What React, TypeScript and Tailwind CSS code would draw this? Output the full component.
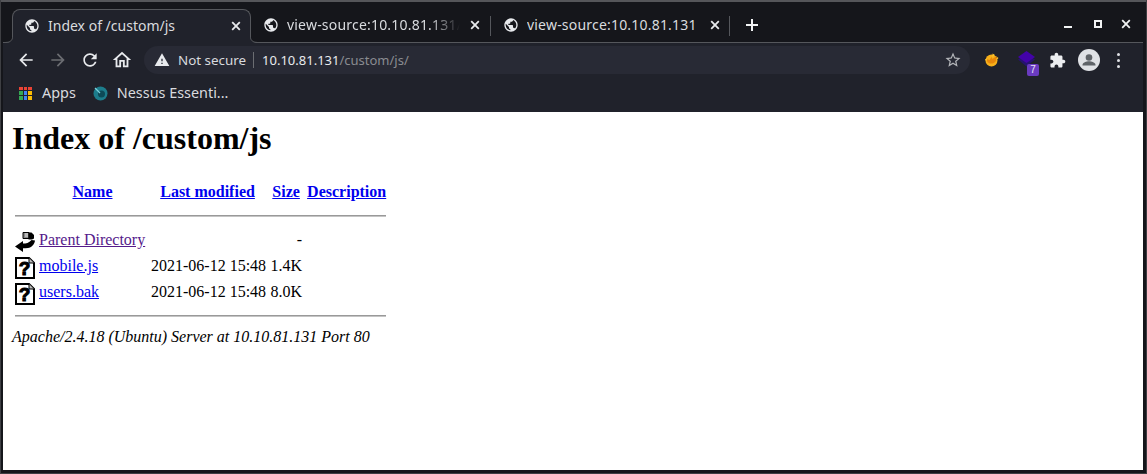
const P = {
  back: "M20 11H7.83l5.59-5.59L12 4l-8 8 8 8 1.41-1.41L7.83 13H20v-2z",
  reload: "M17.65 6.35C16.2 4.9 14.21 4 12 4c-4.42 0-7.99 3.58-7.99 8s3.57 8 7.99 8c3.73 0 6.84-2.55 7.73-6h-2.08c-.82 2.33-3.04 4-5.65 4-3.31 0-6-2.69-6-6s2.69-6 6-6c1.66 0 3.14.69 4.22 1.78L13 11h7V4l-2.35 2.35z",
  home: "M12 5.69l5 4.5V18h-2v-6H9v6H7v-7.81l5-4.5M12 3L2 12h3v8h6v-6h2v6h6v-8h3L12 3z",
  warn: "M1 21h22L12 2 1 21zm12-3h-2v-2h2v2zm0-4h-2v-4h2v4z",
  star: "M22 9.24l-7.19-.62L12 2 9.19 8.63 2 9.24l5.46 4.73L5.82 21 12 17.27 18.18 21l-1.63-7.03L22 9.24zM12 15.4l-3.76 2.27 1-4.28-3.32-2.88 4.38-.38L12 6.1l1.71 4.04 4.38.38-3.32 2.88 1 4.28L12 15.4z",
  ext: "M20.5 11H19V7c0-1.1-.9-2-2-2h-4V3.5C13 2.12 11.88 1 10.5 1S8 2.12 8 3.5V5H4c-1.1 0-1.99.9-1.99 2v3.8H3.5c1.49 0 2.7 1.21 2.7 2.7s-1.21 2.7-2.7 2.7H2V20c0 1.1.9 2 2 2h3.8v-1.5c0-1.49 1.21-2.7 2.7-2.7 1.49 0 2.7 1.21 2.7 2.7V22H17c1.1 0 2-.9 2-2v-4h1.5c1.38 0 2.5-1.12 2.5-2.5S21.88 11 20.5 11z",
  globe: "M12 2C6.48 2 2 6.48 2 12s4.48 10 10 10 10-4.48 10-10S17.52 2 12 2zm-1 17.93c-3.95-.49-7-3.85-7-7.93 0-.62.08-1.21.21-1.79L9 15v1c0 1.1.9 2 2 2v1.93zm6.9-2.54c-.26-.81-1-1.39-1.9-1.39h-1v-3c0-.55-.45-1-1-1H8v-2h2c.55 0 1-.45 1-1V7h2c1.1 0 2-.9 2-2v-.41c2.93 1.19 5 4.06 5 7.41 0 2.08-.8 3.97-2.1 5.39z",
};

function Icon({ d, size = 20, className = "" }: { d: string; size?: number; className?: string }) {
  return (
    <svg width={size} height={size} viewBox="0 0 24 24" fill="currentColor" className={className}>
      <path d={d} />
    </svg>
  );
}

function CloseX({ className = "" }: { className?: string }) {
  return (
    <svg width="10" height="10" viewBox="0 0 10 10" className={className} stroke="currentColor" strokeWidth="1.8" fill="none">
      <path d="M1.2 1.2l7.6 7.6M8.8 1.2l-7.6 7.6" />
    </svg>
  );
}

function Tab({ title, fade, wide }: { title: string; fade?: boolean; wide?: boolean }) {
  return (
    <div className="flex h-[33px] w-[239px] shrink-0 items-center pb-[2px] pl-[12px] pr-[10px] text-[#d9dbdf]">
      <Icon d={P.globe} size={16} className="shrink-0 text-[#e8eaed]" />
      <span
        className={`ml-[8px] flex-1 overflow-hidden whitespace-nowrap ${wide ? "tracking-[0.2px]" : ""} ${fade ? "[mask-image:linear-gradient(to_right,black_82%,transparent)]" : ""}`}
      >
        {title}
      </span>
      <CloseX className="ml-[10px] shrink-0 text-[#e8eaed]" />
    </div>
  );
}

function ParentIcon() {
  return (
    <svg width="20" height="22" viewBox="0 0 20 22" className="block">
      <path d="M8 1.500h6v6H8z" fill="#8a8a8a" stroke="#000" strokeWidth="1" />
      <path d="M10 3h3M10 5h3" stroke="#fff" strokeWidth="0.8" />
      <path d="M13.500 1.500h3l2.500 2.500v3.500l-2 1h-3.500z" fill="#000" />
      <path d="M0 15.500L8 10v2.500c3 0 6-.5 8.500-3.500L20 9.500c-.5 4-3.500 7-7 7.500-1.500.2-3.500.3-5 .3V21z" fill="#000" />
    </svg>
  );
}

function UnknownIcon() {
  return (
    <svg width="20" height="22" viewBox="0 0 20 22" className="block">
      <path d="M1 1H14L19 6V21H1z" fill="#fff" stroke="#000" strokeWidth="2" />
      <path d="M14 1v5h5" fill="#bbb" stroke="#000" strokeWidth="1" />
      <text x="9.500" y="18" textAnchor="middle" fontFamily="'Liberation Sans', sans-serif" fontWeight="700" fontSize="19" fill="#000" stroke="#000" strokeWidth="1">?</text>
    </svg>
  );
}

function Row({ icon, name, date, size, visited }: { icon: React.ReactNode; name: string; date: string; size: string; visited?: boolean }) {
  return (
    <tr>
      <td className="h-[24px] p-[1px] align-top">{icon}</td>
      <td className="p-[1px] align-top">
        <a href="#" className={`underline ${visited ? "text-[#551a8b]" : "text-[#0000ee]"}`}>{name}</a>
      </td>
      <td className="p-[1px] text-right align-top whitespace-nowrap">{date}</td>
      <td className="p-[1px] text-right align-top">{size}</td>
      <td className="p-[1px]"></td>
    </tr>
  );
}

function Th({ label, className }: { label: string; className: string }) {
  return (
    <th className={`p-[1px] text-center font-bold whitespace-nowrap ${className}`}>
      <a href="#" className="text-[#0000ee] underline">{label}</a>
    </th>
  );
}

function HrRow({ className }: { className: string }) {
  return (
    <tr>
      <th colSpan={5} className="p-[1px]">
        <hr className={`h-[2px] border-0 border-t border-b border-t-[#999999] border-b-[#c4c4c4] ${className}`} />
      </th>
    </tr>
  );
}

export default function App() {
  return (
    <div className="flex h-[474px] w-[1147px] flex-col overflow-hidden border border-t-0 border-[#3e3f43] bg-[#15161b] pr-[3px] pb-[3px] pl-[2px] font-['Noto_Sans','Open_Sans',sans-serif] text-[14px]">
      <div className="-mx-[3px] h-[2px] w-[1147px] shrink-0 bg-[#55565a]" />

      {/* Tab strip */}
      <div className="relative flex h-[41px] shrink-0 items-end border-b border-[#55575c] bg-[#15161b] pl-[9px]">
        <div className="relative z-10 -mb-[1px] h-[34px] w-[239px] shrink-0 rounded-t-[8px] border border-b-0 border-[#55575c] bg-[#20222b]">
          <div className="-ml-[1px] flex">
            <Tab title="Index of /custom/js" />
          </div>
          <svg width="9" height="9" viewBox="0 0 9 9" className="absolute -bottom-[0px] -left-[9px]">
            <path d="M9 0v9H0c5 0 8-1 8.500-5z" fill="#20222b" />
            <path d="M0 8.500c5 0 8-1 8.500-5V0" fill="none" stroke="#55575c" />
          </svg>
          <svg width="9" height="9" viewBox="0 0 9 9" className="absolute -right-[9px] -bottom-[0px]">
            <path d="M0 0v9h9c-5 0-8-1-8.500-5z" fill="#20222b" />
            <path d="M9 8.500c-5 0-8-1-8.500-5V0" fill="none" stroke="#55575c" />
          </svg>
        </div>
        <Tab title="view-source:10.10.81.131/custom" fade wide />
        <div className="mb-[6px] h-[20px] w-px shrink-0 bg-[#55575c]" />
        <div className="w-[239px] shrink-0 -mr-[1px]">
          <Tab title="view-source:10.10.81.131" wide />
        </div>
        <div className="mb-[6px] h-[20px] w-px shrink-0 bg-[#55575c]" />
        <div className="flex h-[33px] w-[44px] shrink-0 items-center justify-center pb-[2px] text-[#f1f3f4]">
          <svg width="14" height="14" viewBox="0 0 14 14" stroke="currentColor" strokeWidth="2" fill="none">
            <path d="M7 1v12M1 7h12" />
          </svg>
        </div>
        <div className="ml-auto flex h-[33px] items-center pb-[4px] text-[#f1f3f4]">
          <div className="flex h-[24px] w-[28px] items-center justify-center">
            <div className="mt-[6px] -ml-[4px] h-[2px] w-[8px] bg-current" />
          </div>
          <div className="flex h-[24px] w-[28px] items-center justify-center">
            <div className="h-[8px] w-[8px] border-2 border-current" />
          </div>
          <div className="mr-[3px] flex h-[24px] w-[28px] items-center justify-center">
            <CloseX />
          </div>
        </div>
      </div>

      {/* Toolbar */}
      <div className="flex h-[34px] shrink-0 items-center bg-[#20222b] pl-[7px]">
        <div className="flex h-[32px] w-[32px] items-center justify-center text-[#e8eaed]"><Icon d={P.back} size={20} /></div>
        <div className="flex h-[32px] w-[32px] items-center justify-center text-[#6b6d72]"><Icon d={P.back} size={20} className="rotate-180" /></div>
        <div className="flex h-[32px] w-[32px] items-center justify-center text-[#e8eaed]"><Icon d={P.reload} size={20} /></div>
        <div className="flex h-[32px] w-[32px] items-center justify-center text-[#e8eaed]"><Icon d={P.home} size={22} /></div>
        <div className="ml-[6px] flex h-[28px] w-[826px] shrink-0 items-center rounded-full bg-[#282a35] pl-[10px] pr-[8px] text-[13.4px]">
          <Icon d={P.warn} size={16} className="text-[#e8eaed]" />
          <span className="ml-[8px] pt-[1px] text-[#d8dade]">Not secure</span>
          <div className="ml-[7px] h-[16px] w-px bg-[#6b6d72]" />
          <span className="ml-[8px] pt-[1px] text-[13px] text-[#e8eaed]">10.10.81.131<span className="text-[#8a8c91]">/custom/js/</span></span>
          <Icon d={P.star} size={18} className="ml-auto text-[#b4b6ba]" />
        </div>
        <div className="ml-[12px] flex h-[32px] w-[18px] items-center justify-center">
          <svg width="15" height="14" viewBox="0 0 15 14">
            <circle cx="7.500" cy="7.500" r="6" fill="#f7b01a" />
            <path d="M2.500 6l3 1 2-3 1 2 4-3-.5 5c-2 3-6 3.500-8.500 1z" fill="#e8870a" />
            <path d="M8.500 0.500l2.500 1.500-2.500 2zM1 6l2 0-1 2zM13 4l1.500 1-1.500 1.500z" fill="#ffc62e" />
          </svg>
        </div>
        <div className="relative ml-[15px] flex h-[32px] w-[24px] items-center justify-center">
          <svg width="17" height="17" viewBox="0 0 17 17" className="-mt-[2px] -ml-[2px]">
            <path d="M0 8.500L8.500 3 17 8.500l-8.500 7z" fill="#26136f" />
            <path d="M0 6L8.500 0 17 6l-8.500 6z" fill="#4303a9" />
          </svg>
          <div className="absolute top-[20px] left-[12px] flex h-[12px] w-[12px] items-center justify-center rounded-[2px] bg-[#6a3bc0] font-['Liberation_Sans',sans-serif] text-[10px] leading-none text-[#e8e4f5]">7</div>
        </div>
        <div className="ml-[6px] flex h-[32px] w-[24px] items-center justify-center text-[#eceef0]"><Icon d={P.ext} size={17} /></div>
        <div className="ml-[9px] flex h-[22px] w-[22px] items-center justify-center overflow-hidden rounded-full bg-[#dfe1e5]">
          <svg width="22" height="22" viewBox="0 0 22 22">
            <circle cx="11" cy="8.500" r="3.300" fill="#5f6368" />
            <path d="M4.500 16c0-2.500 4-3.700 6.500-3.700s6.500 1.200 6.500 3.700v.5h-13z" fill="#5f6368" />
          </svg>
        </div>
        <div className="ml-[15px] flex w-[6px] flex-col items-center gap-[3px]">
          <div className="h-[3px] w-[3px] rounded-full bg-[#dfe1e5]" />
          <div className="h-[3px] w-[3px] rounded-full bg-[#dfe1e5]" />
          <div className="h-[3px] w-[3px] rounded-full bg-[#dfe1e5]" />
        </div>
      </div>

      {/* Bookmarks */}
      <div className="flex h-[35px] shrink-0 items-center bg-[#20222b] pb-[3px] pl-[16px] text-[14.4px] text-[#d9dbdf]">
        <div className="grid h-[13px] w-[13px] grid-cols-3 gap-[1px]">
          {["#ea4335", "#ea4335", "#ea4335", "#34a853", "#4285f4", "#fbbc04", "#34a853", "#4285f4", "#fbbc04"].map((c, i) => (
            <div key={i} style={{ backgroundColor: c }} />
          ))}
        </div>
        <span className="ml-[10px]">Apps</span>
        <svg width="15" height="15" viewBox="0 0 15 15" className="ml-[17px]">
          <circle cx="7.500" cy="7.500" r="7" fill="#1d7d8c" />
          <circle cx="8.500" cy="8" r="3.500" fill="#0d4a57" />
          <path d="M2 2l5 5" stroke="#7ad0dc" strokeWidth="1.200" />
        </svg>
        <span className="ml-[9px]">Nessus Essenti...</span>
      </div>

      {/* Page */}
      <div className="min-h-0 flex-1 bg-white pl-[9px] font-['Liberation_Serif',serif] text-[16px] leading-[18px] text-black">
        <h1 className="mt-[8px] mb-[23px] text-[32px] leading-[37px] font-bold">Index of /custom/js</h1>
        <table className="border-separate border-spacing-[2px]">
          <tbody>
            <tr>
              <th className="w-[22px] p-[1px]"></th>
              <Th label="Name" className="w-[110px] pr-[2px]" />
              <Th label="Last modified" className="w-[117px] pr-[3px]" />
              <Th label="Size" className="w-[34px]" />
              <Th label="Description" className="w-[81px] pl-[2px]" />
            </tr>
            <HrRow className="mt-[10px] mb-[10px]" />
            <Row icon={<ParentIcon />} name="Parent Directory" date="" size="-" visited />
            <Row icon={<UnknownIcon />} name="mobile.js" date="2021-06-12 15:48" size="1.4K" />
            <Row icon={<UnknownIcon />} name="users.bak" date="2021-06-12 15:48" size="8.0K" />
            <HrRow className="mt-[6px] mb-[8px]" />
          </tbody>
        </table>
        <address className="italic">Apache/2.4.18 (Ubuntu) Server at 10.10.81.131 Port 80</address>
      </div>
    </div>
  );
}
